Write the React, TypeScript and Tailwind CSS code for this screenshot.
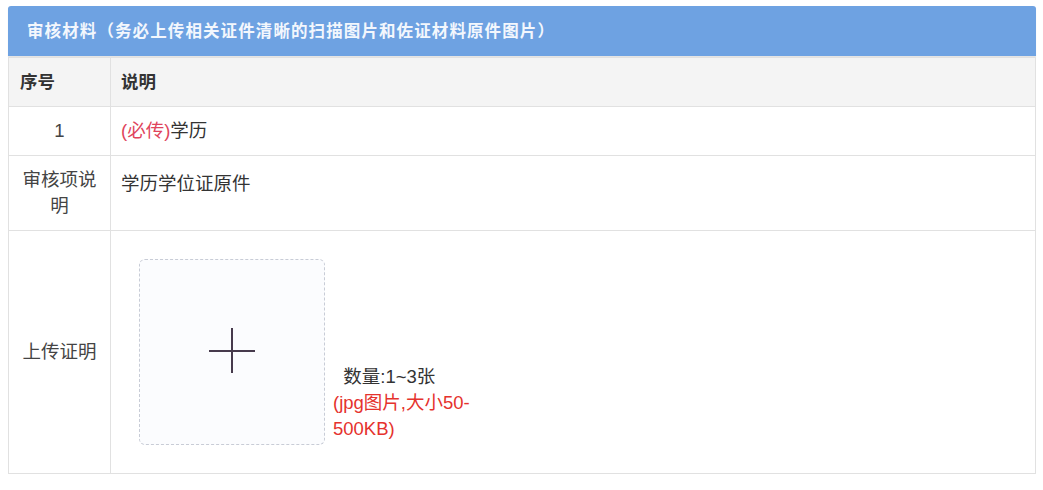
import React from "react";

export default function App() {
  const font = { fontFamily: '"Liberation Sans", "Noto Sans CJK SC", sans-serif' };
  return (
    <div className="w-[1043px] h-[490px] bg-white" style={font}>
      <div className="ml-[8px] pt-[6px] w-[1028px]">
        <div className="h-[50px] rounded-t-[3px] bg-[#6ea2e2] flex items-center pl-[19px] shadow-[0_1px_1px_rgba(0,0,0,0.12)]">
          <span className="text-[16.5px] font-bold text-[#f3f7fd] tracking-[1.1px]">
            审核材料（务必上传相关证件清晰的扫描图片和佐证材料原件图片）
          </span>
        </div>
        <table className="w-full border-collapse mt-[1px] text-[18.5px] text-[#333]">
          <colgroup>
            <col className="w-[102px]" />
            <col />
          </colgroup>
          <tbody>
            <tr className="bg-[#f4f4f4]">
              <td className="border border-[#e1e1e1] pl-[11px] py-[11px] leading-[26px] font-bold text-[17.5px]">序号</td>
              <td className="border border-[#e1e1e1] pl-[10px] py-[11px] leading-[26px] font-bold text-[17.5px]">说明</td>
            </tr>
            <tr>
              <td className="border border-[#e1e1e1] text-center py-[11px] leading-[26px] text-[#444]">1</td>
              <td className="border border-[#e1e1e1] pl-[10px] py-[11px] leading-[26px]">
                <span className="text-[#e0445c]">(必传)</span>学历
              </td>
            </tr>
            <tr>
              <td className="border border-[#e1e1e1] text-center px-[10px] py-[11px] leading-[26px] text-[#444]">审核项说明</td>
              <td className="border border-[#e1e1e1] pl-[10px] pt-[15px] pb-[7px] leading-[26px] align-top">学历学位证原件</td>
            </tr>
            <tr>
              <td className="border border-[#e1e1e1] text-center leading-[26px] text-[#444] align-middle">上传证明</td>
              <td className="border border-[#e1e1e1] pl-[28px] py-[28px]">
                <div className="flex items-end">
                  <div className="w-[186px] h-[186px] rounded-[6px] border border-dashed border-[#c8ccd6] bg-[#fbfcfe] flex items-center justify-center">
                    <svg width="48" height="48" viewBox="0 0 48 48" className="-mt-[2px]">
                      <line x1="1" y1="24" x2="47" y2="24" stroke="#463a4c" strokeWidth="2" />
                      <line x1="24" y1="1" x2="24" y2="46" stroke="#463a4c" strokeWidth="2" />
                    </svg>
                  </div>
                  <div className="ml-[8px] mb-[3px] w-[150px] leading-[26px] text-[18.5px]">
                    <div className="text-[#333]">{"\u00a0\u00a0"}数量:1~3张</div>
                    <div className="text-[#e5322d]">(jpg图片,大小50-500KB)</div>
                  </div>
                </div>
              </td>
            </tr>
          </tbody>
        </table>
      </div>
    </div>
  );
}
